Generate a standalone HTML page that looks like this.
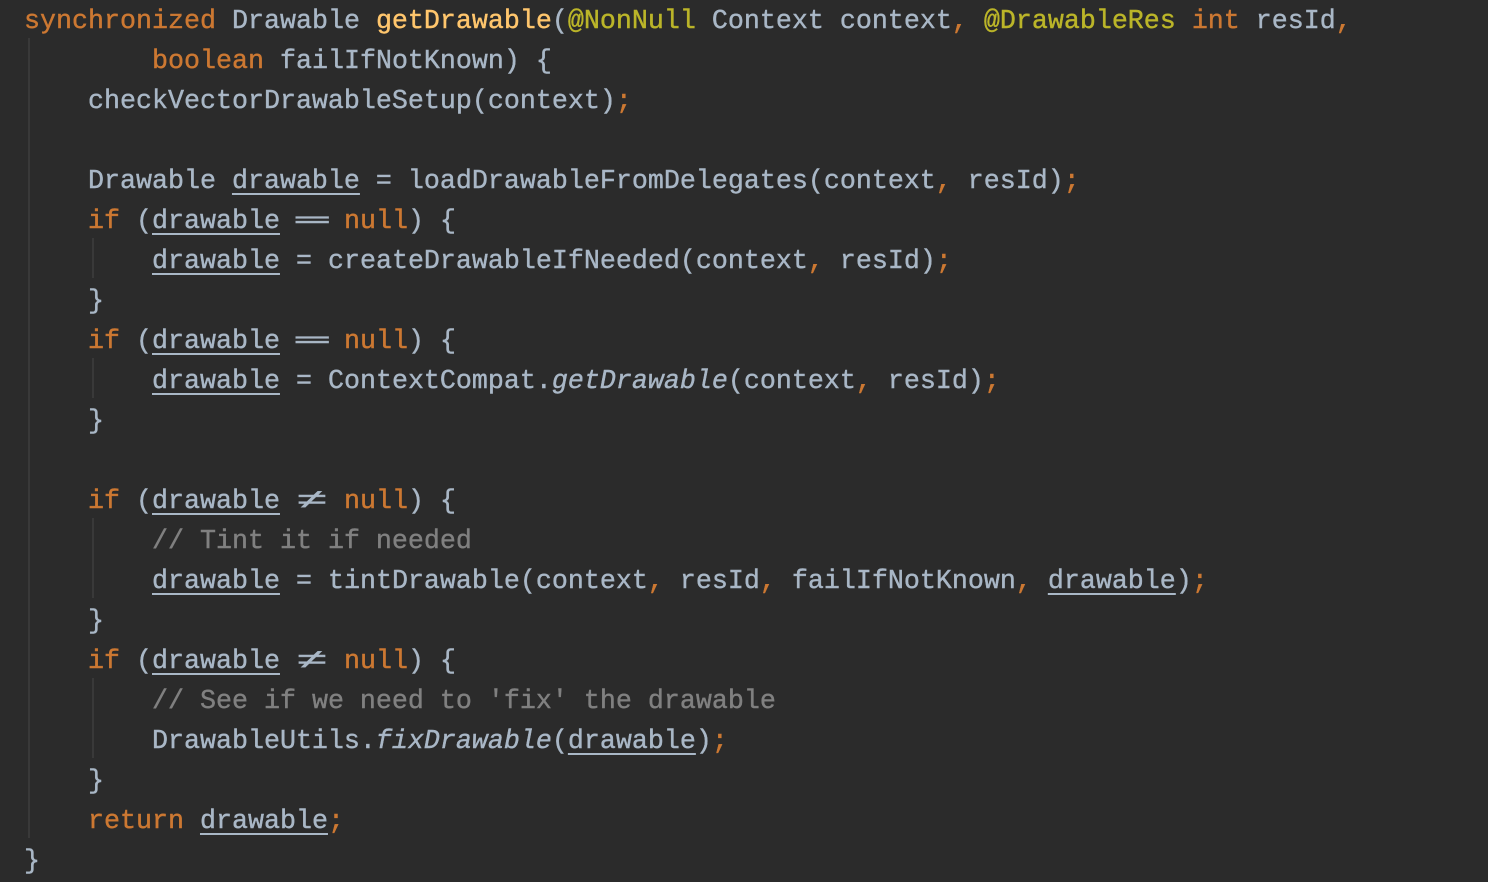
<!DOCTYPE html>
<html><head><meta charset="utf-8"><style>
html,body{margin:0;padding:0;background:#2b2b2b;width:1488px;height:882px;overflow:hidden}
.c{position:absolute;left:24px;top:2px;font-family:"Liberation Mono","DejaVu Sans Mono",monospace;font-size:26.67px;line-height:40px;color:#a9b7c6;white-space:pre;-webkit-text-stroke:0.4px currentColor}
.k{color:#cc7832}.m{color:#ffc66d}.a{color:#bbb529}.cm{color:#808080}
.u{text-decoration:underline;text-underline-offset:5px;text-decoration-thickness:2px}
.i{font-style:italic}
.ne{display:inline-block;width:2ch;text-align:center}
.ne b{display:inline-block;font-weight:normal;transform:scaleX(2)}
.g{position:absolute;width:2px;background:#393939}
</style></head><body>
<div class="g" style="left:28px;top:38px;height:800px"></div>
<div class="g" style="left:92px;top:238px;height:40px"></div>
<div class="g" style="left:92px;top:358px;height:40px"></div>
<div class="g" style="left:92px;top:518px;height:80px"></div>
<div class="g" style="left:92px;top:678px;height:80px"></div>
<div class="c"><span class="k">synchronized</span> Drawable <span class="m">getDrawable</span>(<span class="a">@NonNull</span> Context context<span class="k">,</span> <span class="a">@DrawableRes</span> <span class="k">int</span> resId<span class="k">,</span>
        <span class="k">boolean</span> failIfNotKnown) {
    checkVectorDrawableSetup(context)<span class="k">;</span>

    Drawable <span class="u">drawable</span> = loadDrawableFromDelegates(context<span class="k">,</span> resId)<span class="k">;</span>
    <span class="k">if</span> (<span class="u">drawable</span> <span class="ne"><b>═</b></span> <span class="k">null</span>) {
        <span class="u">drawable</span> = createDrawableIfNeeded(context<span class="k">,</span> resId)<span class="k">;</span>
    }
    <span class="k">if</span> (<span class="u">drawable</span> <span class="ne"><b>═</b></span> <span class="k">null</span>) {
        <span class="u">drawable</span> = ContextCompat.<span class="i">getDrawable</span>(context<span class="k">,</span> resId)<span class="k">;</span>
    }

    <span class="k">if</span> (<span class="u">drawable</span> <span class="ne"><b>≠</b></span> <span class="k">null</span>) {
        <span class="cm">// Tint it if needed</span>
        <span class="u">drawable</span> = tintDrawable(context<span class="k">,</span> resId<span class="k">,</span> failIfNotKnown<span class="k">,</span> <span class="u">drawable</span>)<span class="k">;</span>
    }
    <span class="k">if</span> (<span class="u">drawable</span> <span class="ne"><b>≠</b></span> <span class="k">null</span>) {
        <span class="cm">// See if we need to 'fix' the drawable</span>
        DrawableUtils.<span class="i">fixDrawable</span>(<span class="u">drawable</span>)<span class="k">;</span>
    }
    <span class="k">return</span> <span class="u">drawable</span><span class="k">;</span>
}</div>
</body></html>
